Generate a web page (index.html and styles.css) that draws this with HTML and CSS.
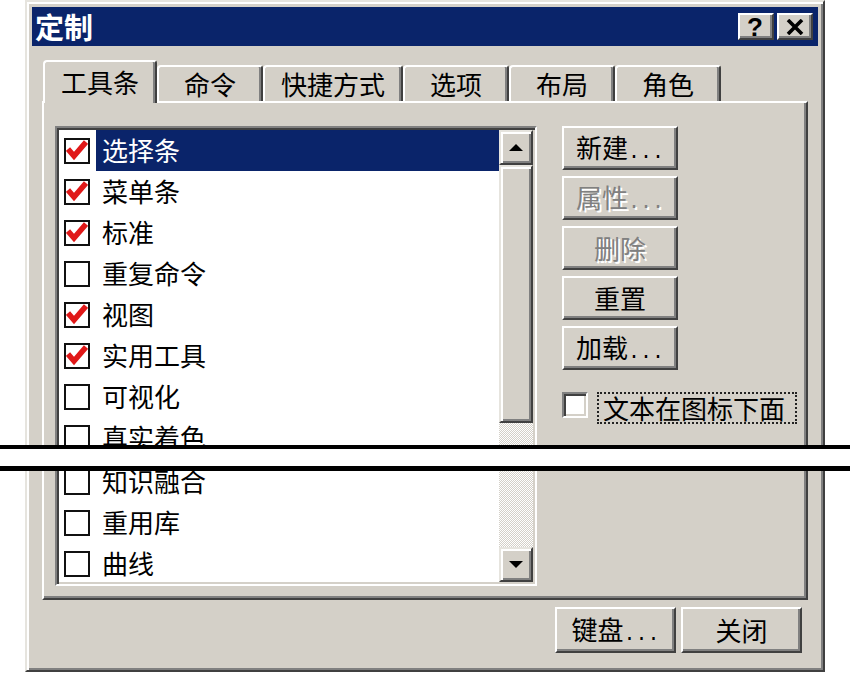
FILE: index.html
```html
<!DOCTYPE html>
<html lang="zh-CN">
<head>
<meta charset="utf-8">
<title>定制</title>
<link rel="stylesheet" href="styles.css">
</head>
<body>
<div class="dialog">
  <div class="titlebar">
    <span class="title">定制</span>
    <div class="caption-btns">
      <span class="cbtn help">?</span>
      <span class="cbtn close"><svg width="18" height="16" viewBox="0 0 18 16"><path d="M2 1 L16 15 M16 1 L2 15" stroke="#000" stroke-width="3.6" fill="none"/></svg></span>
    </div>
  </div>
  <div class="tabs">
    <div class="tab active">工具条</div>
    <div class="tab">命令</div>
    <div class="tab">快捷方式</div>
    <div class="tab">选项</div>
    <div class="tab">布局</div>
    <div class="tab">角色</div>
  </div>
  <div class="panel">
    <div class="listbox">
      <div class="items">
        <div class="row selected"><span class="cb"><svg width="22" height="22" viewBox="0 0 22 22"><polyline points="2,9 8,16 20,2" stroke="#e01818" stroke-width="5.5" fill="none"/></svg></span><span class="label">选择条</span></div>
        <div class="row"><span class="cb"><svg width="22" height="22" viewBox="0 0 22 22"><polyline points="2,9 8,16 20,2" stroke="#e01818" stroke-width="5.5" fill="none"/></svg></span><span class="label">菜单条</span></div>
        <div class="row"><span class="cb"><svg width="22" height="22" viewBox="0 0 22 22"><polyline points="2,9 8,16 20,2" stroke="#e01818" stroke-width="5.5" fill="none"/></svg></span><span class="label">标准</span></div>
        <div class="row"><span class="cb"></span><span class="label">重复命令</span></div>
        <div class="row"><span class="cb"><svg width="22" height="22" viewBox="0 0 22 22"><polyline points="2,9 8,16 20,2" stroke="#e01818" stroke-width="5.5" fill="none"/></svg></span><span class="label">视图</span></div>
        <div class="row"><span class="cb"><svg width="22" height="22" viewBox="0 0 22 22"><polyline points="2,9 8,16 20,2" stroke="#e01818" stroke-width="5.5" fill="none"/></svg></span><span class="label">实用工具</span></div>
        <div class="row"><span class="cb"></span><span class="label">可视化</span></div>
        <div class="row"><span class="cb"></span><span class="label">真实着色</span></div>
        <div class="gap"></div>
        <div class="row"><span class="cb"></span><span class="label">知识融合</span></div>
        <div class="row"><span class="cb"></span><span class="label">重用库</span></div>
        <div class="row"><span class="cb"></span><span class="label">曲线</span></div>
      </div>
      <div class="scrollbar">
        <div class="sbtn"><span class="tri up"></span></div>
        <div class="thumb"></div>
        <div class="track"></div>
        <div class="sbtn"><span class="tri down"></span></div>
      </div>
    </div>
    <div class="side">
      <button class="btn">新建<span class="dots">...</span></button>
      <button class="btn disabled">属性<span class="dots">...</span></button>
      <button class="btn disabled">删除</button>
      <button class="btn">重置</button>
      <button class="btn">加载<span class="dots">...</span></button>
      <div class="opt">
        <span class="cb3d"></span>
        <span class="focus">文本在图标下面</span>
      </div>
    </div>
  </div>
  <div class="footer">
    <button class="btn wide">键盘<span class="dots">...</span></button>
    <button class="btn wide">关闭</button>
  </div>
</div>
<div class="cut"></div>
</body>
</html>
```

FILE: styles.css
```css
* { box-sizing: border-box; }
html, body { margin: 0; padding: 0; background: #fff; }
body {
  width: 850px;
  height: 674px;
  overflow: hidden;
  position: relative;
  font-family: "Noto Sans CJK SC", "Noto Sans", sans-serif;
  font-size: 26px;
  color: #000;
}

.dialog {
  margin-left: 25px;
  width: 800px;
  height: 672px;
  background: #d4d0c8;
  border: 2px solid;
  border-color: #e6e4de #404040 #404040 #e6e4de;
  box-shadow: inset 2px 2px #fff, inset -2px -2px #808080;
  padding: 5px 5px 0;
  display: flex;
  flex-direction: column;
}

.titlebar {
  height: 39px;
  background: #0a246a;
  display: flex;
  align-items: center;
  justify-content: space-between;
  padding: 0 5px 0 3px;
}
.title {
  color: #fff;
  font-weight: bold;
  font-size: 29px;
  line-height: 1;
}
.caption-btns { display: flex; gap: 3px; }
.cbtn {
  width: 36px;
  height: 27px;
  background: #d4d0c8;
  border: 2px solid;
  border-color: #fff #404040 #404040 #fff;
  box-shadow: inset -2px -2px #808080;
  display: flex;
  align-items: center;
  justify-content: center;
}
.help {
  font-family: "Liberation Sans", sans-serif;
  font-weight: bold;
  font-size: 26px;
  line-height: 1;
  padding-right: 2px;
}

.tabs {
  margin-top: 14px;
  height: 41px;
  display: flex;
  align-items: flex-end;
  padding-left: 11px;
  position: relative;
  z-index: 1;
}
.tab {
  height: 36px;
  min-width: 106px;
  padding: 0 16px;
  text-align: center;
  line-height: 33px;
  border-top: 2px solid #fff;
  border-left: 2px solid #fff;
  border-right: 2px solid #404040;
  box-shadow: inset -2px 0 #808080;
  border-radius: 4px 3px 0 0;
  background: #d4d0c8;
}
.tab.active {
  width: 114px;
  height: 43px;
  margin-bottom: -2px;
  padding: 0;
  line-height: 40px;
}

.panel {
  margin: 0 10px;
  height: 499px;
  border: 2px solid;
  border-color: #fff #404040 #404040 #fff;
  box-shadow: inset -2px -2px #808080;
  display: flex;
  align-items: flex-start;
  padding: 23px 0 0 11px;
}

.listbox {
  width: 482px;
  height: 460px;
  border: 2px solid;
  border-color: #808080 #fff #fff #808080;
  padding: 2px;
  box-shadow: inset 2px 2px #404040, inset -2px -2px #d4d0c8;
  display: flex;
}
.items {
  width: 440px;
  height: 452px;
  background: #fff;
  overflow: hidden;
}
.row {
  height: 41px;
  display: flex;
  align-items: center;
}
.gap { height: 3px; }
.cb {
  width: 26px;
  height: 26px;
  margin-left: 5px;
  border: 2px solid #111;
  background: #fff;
  flex: none;
  display: flex;
}
.label {
  flex: 1;
  height: 41px;
  line-height: 40px;
  margin-left: 6px;
  padding-left: 6px;
  white-space: nowrap;
}
.row.selected .label {
  background: #0a246a;
  color: #fff;
}

.scrollbar {
  width: 34px;
  height: 452px;
  display: flex;
  flex-direction: column;
}
.sbtn, .thumb {
  background: #d4d0c8;
  border: 2px solid;
  border-color: #e6e4de #404040 #404040 #e6e4de;
  box-shadow: inset 2px 2px #fff, inset -2px -2px #808080;
}
.sbtn {
  height: 35px;
  display: flex;
  align-items: center;
  justify-content: center;
}
.thumb { height: 258px; }
.track {
  flex: 1;
  background: repeating-conic-gradient(#d4d0c8 0 25%, #fff 0 50%) 0 0 / 2px 2px;
}
.tri {
  width: 0;
  height: 0;
  border-left: 7px solid transparent;
  border-right: 7px solid transparent;
}
.tri.up { border-bottom: 7px solid #000; }
.tri.down { border-top: 7px solid #000; }

.side {
  margin-left: 25px;
  display: flex;
  flex-direction: column;
  gap: 6px;
}
.btn {
  font: inherit;
  color: #000;
  width: 116px;
  height: 44px;
  padding: 0;
  background: #d4d0c8;
  border: 2px solid;
  border-color: #fff #404040 #404040 #fff;
  box-shadow: inset -2px -2px #808080;
  line-height: 38px;
  text-align: center;
  white-space: nowrap;
}
.btn.disabled {
  color: #808080;
  text-shadow: 2px 2px #fff;
}
.dots {
  font-family: "Liberation Mono", monospace;
  font-size: 20px;
}
.opt {
  margin-top: 16px;
  display: flex;
  align-items: flex-start;
}
.cb3d {
  width: 26px;
  height: 26px;
  background: #fff;
  border: 2px solid;
  border-color: #808080 #fff #fff #808080;
  box-shadow: inset 2px 2px #404040, inset -2px -2px #d4d0c8;
  flex: none;
}
.focus {
  margin-left: 9px;
  width: 200px;
  height: 32px;
  border: 2px dotted #222;
  line-height: 27px;
  padding-left: 4px;
  white-space: nowrap;
}

.footer {
  margin-top: 7px;
  padding-right: 16px;
  display: flex;
  justify-content: flex-end;
  gap: 5px;
}
.btn.wide {
  width: 121px;
  height: 46px;
  line-height: 40px;
}

.cut {
  position: absolute;
  left: 0;
  top: 445px;
  width: 850px;
  height: 26px;
  background: #fff;
  border-top: 4px solid #000;
  border-bottom: 5px solid #000;
}
```
